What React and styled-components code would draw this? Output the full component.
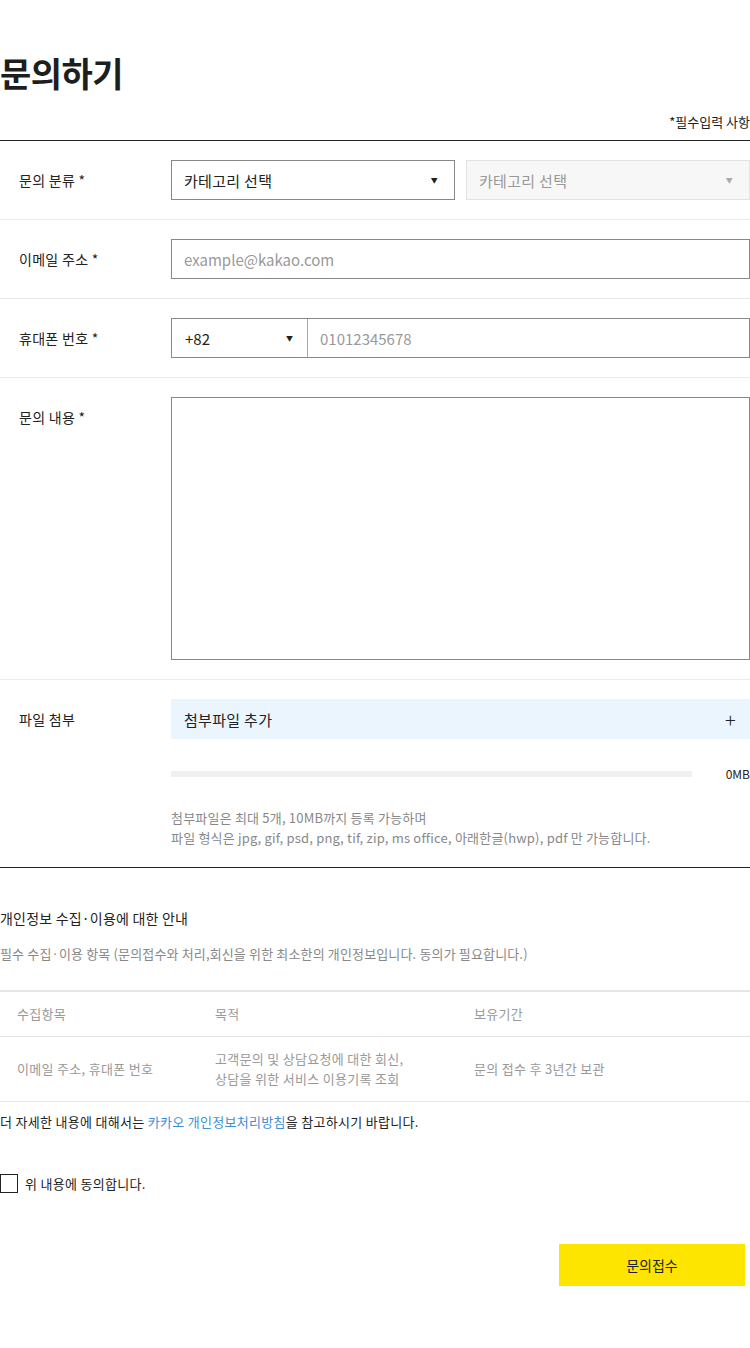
import React from "react";
import styled, { createGlobalStyle } from "styled-components";

const G = createGlobalStyle`
  body { margin:0; font-family: "Noto Sans CJK KR", "Noto Sans", sans-serif; color:#222; background:#fff; }
  * { box-sizing: border-box; }
`;
const Page = styled.div`width:750px; padding-top:50px; padding-bottom:60px;`;
const Title = styled.h1`margin:0; font-size:34px; font-weight:700; line-height:46px; letter-spacing:-0.5px; color:#1e1e1e;`;
const Req = styled.div`text-align:right; font-size:13px; line-height:18px; margin-top:17px; padding-bottom:9px; border-bottom:1px solid #222; letter-spacing:0;`;
const Row = styled.div`display:flex; padding:19px 0; border-bottom:1px solid ${p => p.$last ? "#222" : "#ebebeb"};`;
const Label = styled.div`width:171px; padding-left:19px; font-size:14px; line-height:40px; flex-shrink:0; letter-spacing:0.3px;`;
const Field = styled.div`flex:1; display:flex; gap:11px; flex-direction:${p => p.$col ? "column" : "row"};`;
const Select = styled.div`flex:1; height:40px; border:1px solid ${p => p.$dis ? "#e3e3e3" : "#888"}; background:${p => p.$dis ? "#f7f7f7" : "#fff"};
  display:flex; align-items:center; justify-content:space-between; padding:0 16px 0 12px; font-size:15px; letter-spacing:0.3px; color:${p => p.$dis ? "#999" : "#222"};`;
const Arrow = styled.span`font-size:7px; color:${p => p.$dis ? "#aaa" : "#222"};`;
const Input = styled.div`flex:1; height:40px; border:1px solid #888; display:flex; align-items:center; padding:0 12px; font-size:15px; color:#999;`;
const Phone = styled.div`flex:1; height:40px; border:1px solid #888; display:flex;`;
const Code = styled.div`width:136px; border-right:1px solid #aaa; display:flex; align-items:center; justify-content:space-between; padding:0 14px 0 13px; font-size:15px;`;
const PhoneIn = styled.div`flex:1; display:flex; align-items:center; padding:0 12px; font-size:15px; color:#999;`;
const Area = styled.div`flex:1; height:263px; border:1px solid #888;`;
const AddBtn = styled.div`height:40px; background:#eaf5fe; display:flex; align-items:center; justify-content:space-between; padding:0 14px 0 13px; font-size:15px; letter-spacing:0.3px;`;
const Prog = styled.div`display:flex; align-items:center; margin-top:26px; gap:34px; font-size:12px;`;
const Bar = styled.div`flex:1; height:6px; background:#f0f0f0;`;
const Note = styled.div`margin-top:26px; font-size:13px; line-height:20px; color:#888; letter-spacing:0.2px;`;
const H2 = styled.div`margin-top:40px; font-size:14px; line-height:20px; letter-spacing:0.2px;`;
const Sub = styled.div`margin-top:16px; font-size:13px; color:#888; line-height:20px; letter-spacing:0.15px;`;
const Table = styled.div`margin-top:26px; border-top:2px solid #e5e5e5;`;
const TR = styled.div`display:grid; grid-template-columns:215px 259px 1fr; border-bottom:1px solid #e5e5e5; min-height:${p => p.$h}px; align-items:center;
  font-size:13px; line-height:20px; color:#999; letter-spacing:0.3px; & > div:first-child{padding-left:17px;}`;
const Small = styled.div`margin-top:10px; font-size:13px; line-height:20px; letter-spacing:0.3px;`;
const Link = styled.span`color:#3c8fd9;`;
const Agree = styled.label`display:flex; align-items:center; gap:7px; margin-top:42px; font-size:13px; letter-spacing:0.3px;`;
const Box = styled.span`width:18px; height:19px; border:1px solid #222;`;
const Foot = styled.div`display:flex; justify-content:flex-end; padding-right:5px; margin-top:51px;`;
const Submit = styled.div`width:186px; height:42px; background:#fee500; display:flex; align-items:center; justify-content:center; font-size:14px;`;

export default function App() {
  return (
    <Page>
      <G />
      <Title>문의하기</Title>
      <Req>*필수입력 사항</Req>
      <Row><Label>문의 분류 *</Label><Field>
        <Select>카테고리 선택<Arrow>▼</Arrow></Select>
        <Select $dis>카테고리 선택<Arrow $dis>▼</Arrow></Select>
      </Field></Row>
      <Row><Label>이메일 주소 *</Label><Field><Input>example@kakao.com</Input></Field></Row>
      <Row><Label>휴대폰 번호 *</Label><Field><Phone><Code>+82<Arrow>▼</Arrow></Code><PhoneIn>01012345678</PhoneIn></Phone></Field></Row>
      <Row><Label>문의 내용 *</Label><Field><Area /></Field></Row>
      <Row $last><Label>파일 첨부</Label><Field $col>
        <div>
          <AddBtn>첨부파일 추가<span style={{fontSize: 20, fontWeight: 300}}>+</span></AddBtn>
          <Prog><Bar /><span>0MB</span></Prog>
          <Note>첨부파일은 최대 5개, 10MB까지 등록 가능하며<br />파일 형식은 jpg, gif, psd, png, tif, zip, ms office, 아래한글(hwp), pdf 만 가능합니다.</Note>
        </div>
      </Field></Row>
      <H2>개인정보 수집·이용에 대한 안내</H2>
      <Sub>필수 수집·이용 항목 (문의접수와 처리,회신을 위한 최소한의 개인정보입니다. 동의가 필요합니다.)</Sub>
      <Table>
        <TR $h={45}><div>수집항목</div><div>목적</div><div>보유기간</div></TR>
        <TR $h={65}><div>이메일 주소, 휴대폰 번호</div><div>고객문의 및 상담요청에 대한 회신,<br />상담을 위한 서비스 이용기록 조회</div><div>문의 접수 후 3년간 보관</div></TR>
      </Table>
      <Small>더 자세한 내용에 대해서는 <Link>카카오 개인정보처리방침</Link>을 참고하시기 바랍니다.</Small>
      <Agree><Box />위 내용에 동의합니다.</Agree>
      <Foot><Submit>문의접수</Submit></Foot>
    </Page>
  );
}
